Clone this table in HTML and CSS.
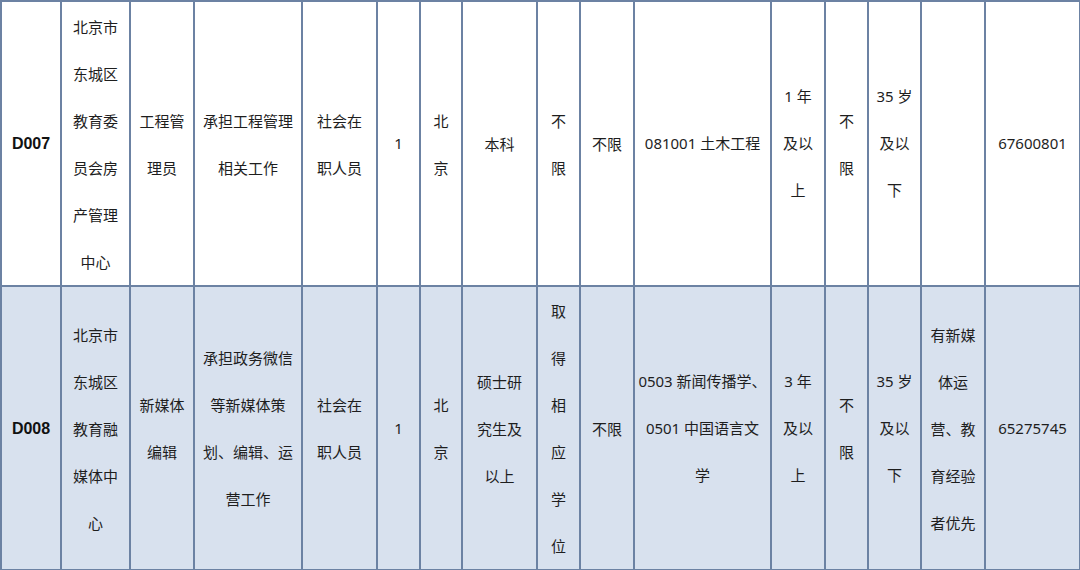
FILE: index.html
```html
<!DOCTYPE html>
<html lang="zh">
<head>
<meta charset="utf-8">
<link rel="stylesheet" href="styles.css">
</head>
<body>
<table class="jobs">
  <colgroup>
    <col class="c-code"><col class="c-unit"><col class="c-post"><col class="c-duty"><col class="c-src">
    <col class="c-num"><col class="c-place"><col class="c-edu"><col class="c-deg"><col class="c-pol">
    <col class="c-major"><col class="c-exp"><col class="c-gen"><col class="c-age"><col class="c-other"><col class="c-tel">
  </colgroup>
  <tr class="row-a">
    <td class="code">D007</td>
    <td>北京市<br>东城区<br>教育委<br>员会房<br>产管理<br>中心</td>
    <td>工程管<br>理员</td>
    <td>承担工程管理<br>相关工作</td>
    <td>社会在<br>职人员</td>
    <td class="num">1</td>
    <td>北<br>京</td>
    <td>本科</td>
    <td>不<br>限</td>
    <td>不限</td>
    <td class="num">081001 土木工程</td>
    <td class="num">1 年<br>及以<br>上</td>
    <td>不<br>限</td>
    <td class="num">35 岁<br>及以<br>下</td>
    <td></td>
    <td class="num">67600801</td>
  </tr>
  <tr class="row-b">
    <td class="code">D008</td>
    <td>北京市<br>东城区<br>教育融<br>媒体中<br>心</td>
    <td>新媒体<br>编辑</td>
    <td>承担政务微信<br>等新媒体策<br>划、编辑、运<br>营工作</td>
    <td>社会在<br>职人员</td>
    <td class="num">1</td>
    <td>北<br>京</td>
    <td>硕士研<br>究生及<br>以上</td>
    <td>取<br>得<br>相<br>应<br>学<br>位</td>
    <td>不限</td>
    <td class="num">0503 新闻传播学、<br>0501 中国语言文<br>学</td>
    <td class="num">3 年<br>及以<br>上</td>
    <td>不<br>限</td>
    <td class="num">35 岁<br>及以<br>下</td>
    <td>有新媒<br>体运<br>营、教<br>育经验<br>者优先</td>
    <td class="num">65275745</td>
  </tr>
</table>
</body>
</html>
```

FILE: styles.css
```css
html, body {
  margin: 0;
  padding: 0;
  background: #ffffff;
  overflow: hidden;
}

.jobs {
  border-collapse: collapse;
  table-layout: fixed;
  width: 1079px;
  font-family: "Noto Sans CJK SC", "Noto Sans", sans-serif;
  font-size: 15px;
  line-height: 47px;
  color: #1e1e1e;
}

.jobs td {
  border: 2px solid #6c82a3;
  padding: 0;
  text-align: center;
  vertical-align: middle;
  white-space: nowrap;
  overflow: hidden;
}

.row-a { height: 285px; background: #ffffff; }
.row-b { height: 283px; background: #d8e1ee; }

.code {
  font-family: "Liberation Sans", Arial, sans-serif;
  font-weight: bold;
  font-size: 16px;
  color: #111;
}

.num {
  font-family: "Noto Sans", "Noto Sans CJK SC", sans-serif;
}

.c-code { width: 60px; }
.c-unit { width: 69px; }
.c-post { width: 64px; }
.c-duty { width: 108px; }
.c-src { width: 75px; }
.c-num { width: 43px; }
.c-place { width: 42px; }
.c-edu { width: 75px; }
.c-deg { width: 43px; }
.c-pol { width: 54px; }
.c-major { width: 137px; }
.c-exp { width: 54px; }
.c-gen { width: 43px; }
.c-age { width: 53px; }
.c-other { width: 64px; }
.c-tel { width: 95px; }
```
